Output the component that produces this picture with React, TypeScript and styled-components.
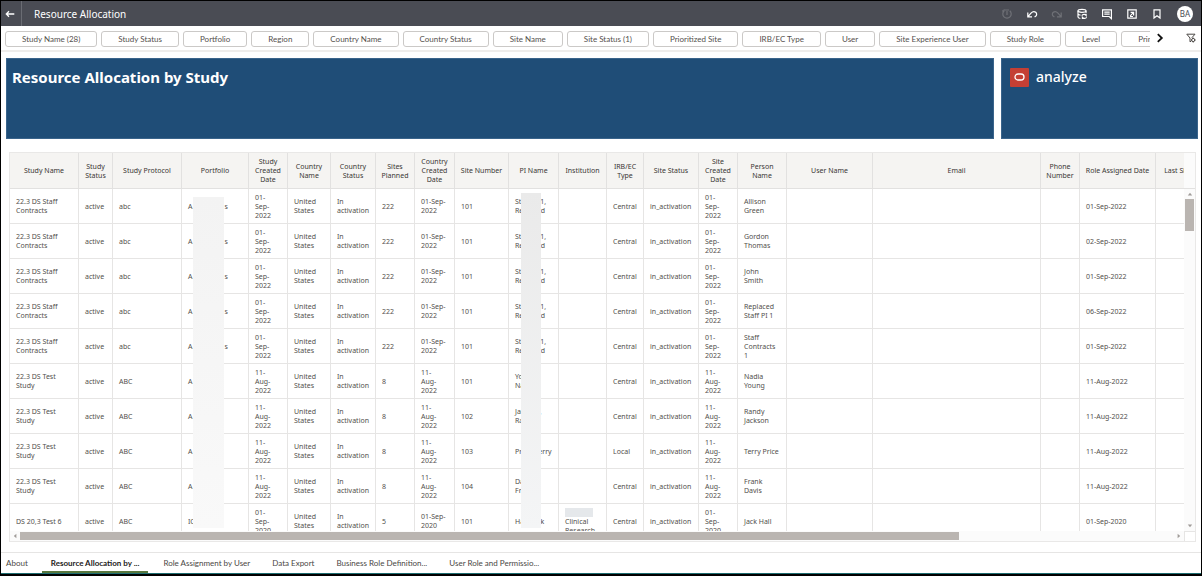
import React from "react";
import styled, { createGlobalStyle } from "styled-components";

const bodyFont = '"Noto Sans", "Open Sans", sans-serif';
const controlFont = 'Lato, "Noto Sans", sans-serif';

const GlobalStyle = createGlobalStyle`
  *, *::before, *::after { box-sizing: border-box; }
  body {
    margin: 0;
    background: #fff;
    color: #524f4c;
    font-family: ${bodyFont};
  }
  button { font: inherit; color: inherit; margin: 0; }
  h1, h2 { margin: 0; }
`;

const Shell = styled.div`
  display: flex;
  flex-direction: column;
  height: 100vh;
  border: 1px solid #000;
  border-bottom-width: 2px;
  overflow: hidden;
`;

const TopBar = styled.header`
  display: flex;
  align-items: center;
  flex: none;
  height: 25px;
  padding-right: 8px;
  background: #4a4c54;
  color: #fff;
`;

const BackButton = styled.button`
  display: grid;
  place-items: center;
  width: 21px;
  height: 25px;
  padding: 0 2px 0 0;
  border: 0;
  border-right: 1px solid #6a6c73;
  background: none;
`;

const PageTitle = styled.h1`
  flex: 1;
  padding-left: 12px;
  font-size: 10px;
  font-weight: 400;
  line-height: 14px;
`;

const Tools = styled.div`
  display: flex;
  align-items: center;
  gap: 13px;
`;

const ToolButton = styled.button`
  display: grid;
  place-items: center;
  width: 12px;
  height: 12px;
  padding: 0;
  border: 0;
  background: none;
  opacity: ${(p) => (p.disabled ? 0.2 : 1)};
`;

const Avatar = styled.button`
  display: grid;
  place-items: center;
  width: 16px;
  height: 16px;
  margin-left: 1px;
  padding: 0;
  border: 0;
  border-radius: 50%;
  background: #fff;
  color: #4a4c54;
  font-size: 8px;
  line-height: 10px;
`;

const FilterBar = styled.nav`
  display: flex;
  align-items: center;
  flex: none;
  height: 26px;
  padding: 2px 0 0 4px;
  border-bottom: 2px solid #efedeb;
`;

const FilterStrip = styled.div`
  display: flex;
  flex: 1;
  min-width: 0;
  gap: 4px;
  overflow: hidden;
`;

const FilterButton = styled.button`
  flex: none;
  height: 16px;
  padding: 0 16px;
  border: 1px solid #cbc9c7;
  border-radius: 3px;
  background: #fff;
  color: #54504d;
  font-family: ${controlFont};
  font-size: 8px;
  line-height: 12px;
  white-space: nowrap;
`;

const FilterEnd = styled.div`
  display: flex;
  align-items: center;
  flex: none;
  justify-content: space-between;
  width: 51px;
  padding: 0 5px 2px 6px;
`;

const IconButton = styled.button`
  display: grid;
  place-items: center;
  padding: 0;
  border: 0;
  background: none;
`;

const Banners = styled.section`
  display: flex;
  flex: none;
  gap: 7px;
  height: 81px;
  margin: 6px 3px 0 5px;
`;

const Banner = styled.div<{ $width?: number }>`
  display: flex;
  align-items: flex-start;
  flex: ${(p) => (p.$width ? `none` : 1)};
  width: ${(p) => (p.$width ? `${p.$width}px` : "auto")};
  padding: 8px 5px;
  border: 1px solid #3a648b;
  background: #1f4d77;
  color: #fff;
`;

const BannerTitle = styled.h2`
  font-size: 15px;
  font-weight: 700;
  line-height: 20px;
`;

const Brand = styled.div`
  display: flex;
  align-items: center;
  gap: 7px;
  padding-left: 3px;
  font-size: 14px;
  font-weight: 500;
  line-height: 20px;
`;

const BrandMark = styled.span`
  display: grid;
  place-items: center;
  width: 19px;
  height: 19px;
  border-radius: 1px;
  background: #c43f34;
`;

const TablePanel = styled.section`
  position: relative;
  display: grid;
  grid-template-columns: minmax(0, 1fr) 11px;
  grid-template-rows: minmax(0, 1fr) 10px;
  flex: 1;
  min-height: 0;
  margin: 13px 5px 10px 8px;
  border: 1px solid #e9e8e7;
`;

const Viewport = styled.div`
  position: relative;
  overflow: hidden;
`;

const Grid = styled.table`
  width: 1234px;
  border-collapse: separate;
  border-spacing: 0;
  table-layout: fixed;
  font-size: 7px;
  line-height: 9px;
`;

const HeadCell = styled.th`
  height: 36px;
  padding: 0 4px;
  border-right: 1px solid #e2e1e0;
  border-bottom: 1px solid #e2e1e0;
  background: #f5f4f2;
  color: #3a3734;
  font-weight: 400;
  text-align: center;
`;

const Cell = styled.td`
  height: 35px;
  padding: 0 0 0 6px;
  border-right: 1px solid #e6e5e4;
  border-bottom: 1px solid #e6e5e4;
  white-space: pre-line;
`;

const Gap = styled.span`
  display: inline-block;
  width: 32px;
`;

const LineMask = styled.span`
  display: block;
  width: 28px;
  height: 9px;
  background: #e5e8eb;
`;

const ColumnMask = styled.div<{ $left: number; $top: number; $width: number; $from: string; $to: string }>`
  position: absolute;
  left: ${(p) => p.$left}px;
  top: ${(p) => p.$top}px;
  bottom: 3px;
  width: ${(p) => p.$width}px;
  background: linear-gradient(${(p) => p.$from}, ${(p) => p.$to});
`;

const VerticalBar = styled.div`
  display: flex;
  flex-direction: column;
  align-items: center;
  background: #fbfbfb;
`;

const BarHead = styled.div`
  flex: none;
  align-self: stretch;
  height: 36px;
  border-bottom: 1px solid #e2e1e0;
`;

const VerticalThumb = styled.div`
  width: 9px;
  height: 32px;
  background: #bab5b1;
`;

const HorizontalBar = styled.div`
  display: flex;
  align-items: center;
  background: #fbfbfb;
`;

const HorizontalThumb = styled.div`
  width: 80%;
  height: 8px;
  background: #bab5b1;
`;

const Spacer = styled.div`
  flex: 1;
`;

const ArrowSlot = styled.span`
  display: grid;
  place-items: center;
  flex: none;
  width: 10px;
  height: 10px;
`;

const Corner = styled.div`
  border-left: 1px solid #e6e5e4;
  border-top: 1px solid #e6e5e4;
`;

const Tabs = styled.nav`
  display: flex;
  flex: none;
  gap: 8px;
  height: 22px;
  border-top: 1px solid #e6e5e4;
  border-bottom: 1px solid #1d6c70;
  font-family: ${controlFont};
  font-size: 8px;
  line-height: 12px;
`;

const Tab = styled.button<{ $active?: boolean }>`
  height: 20px;
  padding: 2px ${(p) => (p.$active ? 9 : 7)}px 0;
  border: 0;
  border-bottom: 2px solid ${(p) => (p.$active ? "#57783f" : "transparent")};
  background: none;
  color: ${(p) => (p.$active ? "#1c1a19" : "#4a4744")};
  font-weight: ${(p) => (p.$active ? 700 : 400)};
  white-space: nowrap;

  &:first-child {
    padding-right: 6px;
    padding-left: 5px;
  }
`;

type ArrowProps = { turn: number };

const Arrow = ({ turn }: ArrowProps) => (
  <ArrowSlot>
    <svg width="6" height="6" viewBox="0 0 6 6" transform={`rotate(${turn})`}>
      <path d="M.8 4.4 3 1.8l2.2 2.6z" fill="#a09c99" />
    </svg>
  </ArrowSlot>
);

const Glyph = ({ children }: { children: React.ReactNode }) => (
  <svg width="12" height="12" viewBox="0 0 12 12" fill="none" stroke="#fff" strokeWidth="1.2">
    {children}
  </svg>
);

const tools = [
  {
    name: "Restore",
    disabled: true,
    icon: (
      <>
        <path d="M3.2 2.8A4.2 4.2 0 1 0 8.8 2.8M3.2 2.8h-2M3.2 2.8v-1.6" />
        <path d="M6 3v4M4 2h4" />
      </>
    ),
  },
  {
    name: "Undo",
    icon: <path d="M1.8 4.6v4.2h4.2M2 8.6 5 5.2C6.4 3.6 8.4 3.2 9.7 4.3c1.3 1.1 1.2 2.7.2 3.7L8.6 8.9" />,
  },
  {
    name: "Redo",
    disabled: true,
    icon: <path d="M10.2 4.6v4.2H6M10 8.6 7 5.2C5.6 3.6 3.6 3.2 2.3 4.3c-1.3 1.1-1.2 2.7-.2 3.7l1.3.9" />,
  },
  {
    name: "Refresh data",
    icon: (
      <>
        <ellipse cx="6" cy="2.8" rx="4" ry="1.5" />
        <path d="M2 2.8v6.2c0 .8 1 1.3 2.400 1.5M10 2.8v2.4M2 6c.5.7 1.400 1 2.500 1.100" />
        <path d="M5.8 7.6c.8-1.5 3.3-1.600 4.300-.2V6M10.600 9.200c-.8 1.500-3.200 1.600-4.200.2v1.500" />
      </>
    ),
  },
  {
    name: "Comments",
    icon: (
      <>
        <path d="M1.6 1.9h8.8v8.7L8.2 8.5H1.6z" />
        <path d="M3.3 4.2h5.4M3.3 6.2h5.4" />
      </>
    ),
  },
  {
    name: "Export",
    icon: (
      <>
        <path d="M1.8 1.8h8.4v8.4H1.8z" />
        <path d="M4.6 4.4h3v3M7.4 4.6 4.2 7.8M4 8.5h3" />
      </>
    ),
  },
  { name: "Bookmark", icon: <path d="M3 1.800h6v8.200L6 7.700 3 10z" /> },
];

const filters = [
  "Study Name (28)",
  "Study Status",
  "Portfolio",
  "Region",
  "Country Name",
  "Country Status",
  "Site Name",
  "Site Status (1)",
  "Prioritized Site",
  "IRB/EC Type",
  "User",
  "Site Experience User",
  "Study Role",
  "Level",
  "Primary",
];

const columns: [string, number][] = [
  ["Study Name", 69],
  ["Study Status", 34],
  ["Study Protocol", 69],
  ["Portfolio", 67],
  ["Study Created Date", 39],
  ["Country Name", 43],
  ["Country Status", 45],
  ["Sites Planned", 39],
  ["Country Created Date", 40],
  ["Site Number", 54],
  ["PI Name", 50],
  ["Institution", 48],
  ["IRB/EC Type", 37],
  ["Site Status", 55],
  ["Site Created Date", 39],
  ["Person Name", 49],
  ["User Name", 86],
  ["Email", 168],
  ["Phone Number", 39],
  ["Role Assigned Date", 76],
  ["Last Site Update Date", 88],
];

type Row = {
  study: string;
  protocol: string;
  portfolio: React.ReactNode;
  created: string;
  planned: string;
  countryCreated: string;
  site: string;
  pi: string;
  institution?: React.ReactNode;
  irb?: string;
  person: string;
  assigned: string;
};

const staffRow = (person: string, assigned: string): Row => ({
  study: "22.3 DS Staff Contracts",
  protocol: "abc",
  portfolio: (
    <>
      A<Gap />s
    </>
  ),
  created: "01-\nSep-\n2022",
  planned: "222",
  countryCreated: "01-Sep-\n2022",
  site: "101",
  pi: "Staff PI 1,\nReplaced",
  person,
  assigned,
});

const testRow = (site: string, pi: string, person: string, irb = "Central"): Row => ({
  study: "22.3 DS Test\nStudy",
  protocol: "ABC",
  portfolio: "A",
  created: "11-\nAug-\n2022",
  planned: "8",
  countryCreated: "11-\nAug-\n2022",
  site,
  pi,
  irb,
  person,
  assigned: "11-Aug-2022",
});

const rows: Row[] = [
  staffRow("Allison\nGreen", "01-Sep-2022"),
  staffRow("Gordon\nThomas", "02-Sep-2022"),
  staffRow("John\nSmith", "01-Sep-2022"),
  staffRow("Replaced\nStaff PI 1", "06-Sep-2022"),
  staffRow("Staff\nContracts\n1", "01-Sep-2022"),
  testRow("101", "Young,\nNadia", "Nadia\nYoung"),
  testRow("102", "Jackson,\nRandy", "Randy\nJackson"),
  testRow("103", "Price, Terry", "Terry Price", "Local"),
  testRow("104", "Davis,\nFrank", "Frank\nDavis"),
  {
    study: "DS 20,3 Test 6",
    protocol: "ABC",
    portfolio: "IC",
    created: "01-\nSep-\n2020",
    planned: "5",
    countryCreated: "01-Sep-\n2020",
    site: "101",
    pi: "Hall, Jack",
    institution: (
      <>
        <LineMask />
        {"Clinical\nResearch"}
      </>
    ),
    person: "Jack Hall",
    assigned: "01-Sep-2020",
  },
];

const tabs = [
  "About",
  "Resource Allocation by ...",
  "Role Assignment by User",
  "Data Export",
  "Business Role Definition...",
  "User Role and Permissio...",
];

export default function App() {
  return (
    <>
      <GlobalStyle />
      <Shell>
        <TopBar>
          <BackButton aria-label="Back">
            <svg width="10" height="8" viewBox="0 0 10 8" fill="none" stroke="#fff" strokeWidth="1.3">
              <path d="M9.3 4H1.3M4 1.3 1.3 4 4 6.7" />
            </svg>
          </BackButton>
          <PageTitle>Resource Allocation</PageTitle>
          <Tools>
            {tools.map((tool) => (
              <ToolButton key={tool.name} aria-label={tool.name} disabled={tool.disabled}>
                <Glyph>{tool.icon}</Glyph>
              </ToolButton>
            ))}
            <Avatar>BA</Avatar>
          </Tools>
        </TopBar>

        <FilterBar aria-label="Filters">
          <FilterStrip>
            {filters.map((name) => (
              <FilterButton key={name}>{name}</FilterButton>
            ))}
          </FilterStrip>
          <FilterEnd>
            <IconButton aria-label="More filters">
              <svg width="8" height="10" viewBox="0 0 8 10" fill="none" stroke="#111" strokeWidth="1.8">
                <path d="M1.8 1.2 5.8 5 1.8 8.8" />
              </svg>
            </IconButton>
            <IconButton aria-label="Filter options">
              <svg width="10" height="10" viewBox="0 0 10 10" fill="none" stroke="#4a4744" strokeWidth="1">
                <path d="M.8 1.2h8.2L5.8 4.8M.8 1.2 4 5v3.8l1.3-.8" />
                <circle cx="7.2" cy="7" r="1.6" />
                <path d="M7.2 4.7v1M7.2 8.3v1.2M5 7h.8M8.6 7h1" />
              </svg>
            </IconButton>
          </FilterEnd>
        </FilterBar>

        <Banners>
          <Banner>
            <BannerTitle>Resource Allocation by Study</BannerTitle>
          </Banner>
          <Banner $width={197}>
            <Brand>
              <BrandMark>
                <svg width="11" height="8" viewBox="0 0 11 8" fill="none" stroke="#fff" strokeWidth="1.3">
                  <rect x="1" y="1" width="9" height="6" rx="3" />
                </svg>
              </BrandMark>
              analyze
            </Brand>
          </Banner>
        </Banners>

        <TablePanel>
          <Viewport>
            <Grid>
              <colgroup>
                {columns.map(([name, width]) => (
                  <col key={name} width={width} />
                ))}
              </colgroup>
              <thead>
                <tr>
                  {columns.map(([name]) => (
                    <HeadCell key={name} scope="col">
                      {name}
                    </HeadCell>
                  ))}
                </tr>
              </thead>
              <tbody>
                {rows.map((row) => (
                  <tr key={row.person}>
                    <Cell>{row.study}</Cell>
                    <Cell>active</Cell>
                    <Cell>{row.protocol}</Cell>
                    <Cell>{row.portfolio}</Cell>
                    <Cell>{row.created}</Cell>
                    <Cell>{"United\nStates"}</Cell>
                    <Cell>{"In\nactivation"}</Cell>
                    <Cell>{row.planned}</Cell>
                    <Cell>{row.countryCreated}</Cell>
                    <Cell>{row.site}</Cell>
                    <Cell>{row.pi}</Cell>
                    <Cell>{row.institution}</Cell>
                    <Cell>{row.irb ?? "Central"}</Cell>
                    <Cell>in_activation</Cell>
                    <Cell>{row.created}</Cell>
                    <Cell>{row.person}</Cell>
                    <Cell />
                    <Cell />
                    <Cell />
                    <Cell>{row.assigned}</Cell>
                    <Cell />
                  </tr>
                ))}
              </tbody>
            </Grid>
            <ColumnMask $left={183} $top={44} $width={31} $from="#f3f3f3" $to="#f9f9f9" />
            <ColumnMask $left={511} $top={40} $width={20} $from="#eaeaea" $to="#f4f5f6" />
          </Viewport>
          <VerticalBar>
            <BarHead />
            <Arrow turn={0} />
            <VerticalThumb />
            <Spacer />
            <Arrow turn={180} />
          </VerticalBar>
          <HorizontalBar>
            <Arrow turn={-90} />
            <HorizontalThumb />
            <Spacer />
            <Arrow turn={90} />
          </HorizontalBar>
          <Corner />
        </TablePanel>

        <Tabs aria-label="Canvases">
          {tabs.map((name, index) => (
            <Tab key={name} $active={index === 1} aria-current={index === 1 ? "page" : undefined}>
              {name}
            </Tab>
          ))}
        </Tabs>
      </Shell>
    </>
  );
}
